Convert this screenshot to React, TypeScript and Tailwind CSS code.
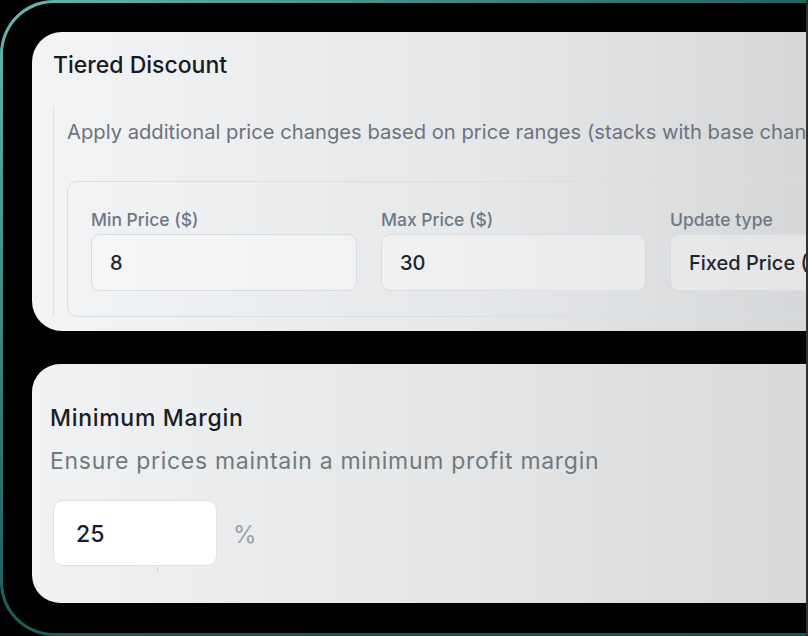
import React from 'react';

const Field: React.FC<{ label: string; value: string; className?: string }> = ({ label, value, className }) => (
  <div className={`flex shrink-0 flex-col gap-[4px] ${className ?? ''}`}>
    <span className="text-[17.5px] font-medium leading-[20px] whitespace-nowrap text-[#6b7888]">{label}</span>
    <div className="flex h-[57px] items-center rounded-[9px] border border-[#d9dce1] bg-white/35 px-[18px] text-[20px] font-medium text-[#1f2530]">
      <span className="whitespace-nowrap">{value}</span>
    </div>
  </div>
);

export default function App() {
  return (
    <div className="flex h-[636px] w-[808px] overflow-hidden bg-black" style={{ fontFamily: 'Inter, "Noto Sans", sans-serif' }}>
      <div className="relative h-[636px] w-[806px] overflow-hidden">
        {/* outer frame with teal edge */}
        <div className="h-[636px] w-[900px] rounded-[54px] bg-gradient-to-br from-[#6cb6b0] via-[#1c5a55] to-[#0d5a51] p-[3px]">
          <div className="flex h-full flex-col gap-[33px] rounded-[51px] bg-black pl-[29px] pt-[29px]">
            {/* Tiered Discount */}
            <div className="h-[299px] w-[900px] rounded-[30px] bg-gradient-to-r from-[#f3f4f5] via-[#e6e7e8] to-[#d0d1d2] pl-[21px] pt-[19px]">
              <h2 className="text-[23px] font-medium leading-[28px] text-[#151a24]">Tiered Discount</h2>
              <div className="mt-[27px] border-l border-[#dfe1e4] pl-[13px]">
                <p className="pt-[14px] text-[20.2px] leading-[24px] whitespace-nowrap text-[#6c7380]">
                  Apply additional price changes based on price ranges (stacks with base changes)
                </p>
                <div className="mt-[37px] flex h-[136px] gap-[24px] rounded-[10px] border border-[#dadde1] pl-[23px] pt-[28px]">
                  <Field label="Min Price ($)" value="8" className="w-[266px]" />
                  <Field label="Max Price ($)" value="30" className="w-[265px]" />
                  <Field label="Update type" value="Fixed Price ($)" className="w-[266px]" />
                </div>
              </div>
            </div>
            {/* Minimum Margin */}
            <div className="h-[239px] w-[900px] rounded-[28px] bg-gradient-to-r from-[#f1f2f3] via-[#e4e5e6] to-[#d3d4d5] pl-[18px] pt-[40px]">
              <h2 className="text-[23px] font-medium leading-[28px] tracking-[0.7px] text-[#1a1d26]">Minimum Margin</h2>
              <p className="mt-[15px] text-[23px] leading-[28px] tracking-[0.7px] text-[#6f7a80]">Ensure prices maintain a minimum profit margin</p>
              <div className="mt-[25px] flex items-center gap-[16px] pl-[3px]">
                <div className="relative flex h-[66px] w-[164px] items-center rounded-[10px] border border-[#e0e2e7] bg-white pl-[22px] pt-[3px] text-[23px] font-medium text-[#1b1c2c]">
                  25
                  <span className="absolute left-[103px] top-[66px] h-[5px] w-px bg-[#c9ccd0]" />
                </div>
                <span className="pt-[3px] text-[24px] text-[#9aa2ad]">%</span>
              </div>
            </div>
          </div>
        </div>
      </div>
      <div className="h-[636px] w-[2px] bg-[#2f3030]" />
    </div>
  );
}
